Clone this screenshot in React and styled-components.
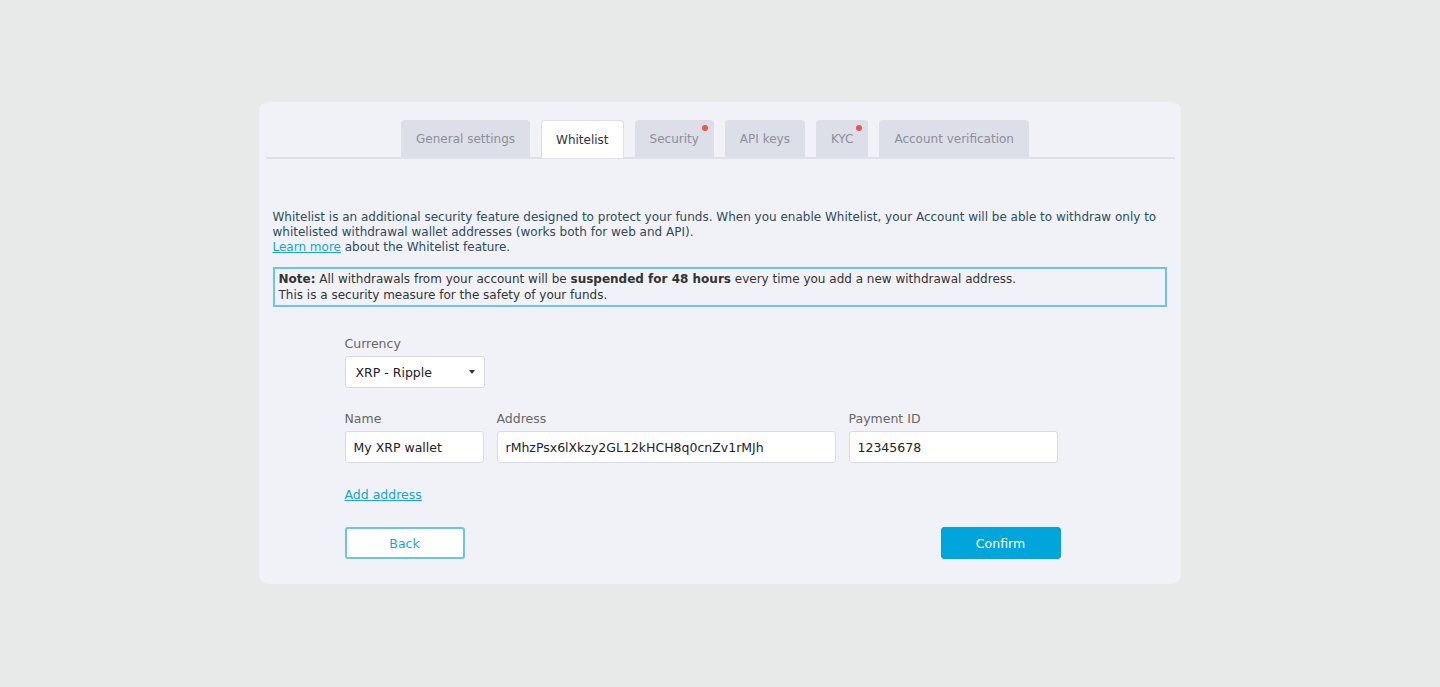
import React, { useState } from 'react';
import styled, { createGlobalStyle } from 'styled-components';

const GlobalStyle = createGlobalStyle`
    html, body {
        margin: 0;
        padding: 0;
        background: #e8e9e9;
        font-family: "DejaVu Sans", Verdana, sans-serif;
    }
`;

const tabs = [
    { id: 'general', label: 'General settings' },
    { id: 'whitelist', label: 'Whitelist' },
    { id: 'security', label: 'Security', dot: true },
    { id: 'api', label: 'API keys' },
    { id: 'kyc', label: 'KYC', dot: true },
    { id: 'verification', label: 'Account verification' },
];

const App = () => {
    const [active, setActive] = useState('whitelist');
    return (
        <>
            <GlobalStyle />
            <Page>
                <Card>
                    <TabBar>
                        {tabs.map((t) => (
                            <Tab key={t.id} $active={active === t.id} onClick={() => setActive(t.id)}>
                                {t.label}
                                {t.dot && <Dot />}
                            </Tab>
                        ))}
                    </TabBar>
                    <Body>
                        <Intro>
                            Whitelist is an additional security feature designed to protect your funds. When you enable Whitelist, your Account will be able to withdraw only to whitelisted withdrawal wallet addresses (works both for web and API).
                            <br />
                            <TextLink href="#">Learn more</TextLink> about the Whitelist feature.
                        </Intro>
                        <Note>
                            <b>Note:</b> All withdrawals from your account will be <b>suspended for 48 hours</b> every time you add a new withdrawal address.
                            <br />
                            This is a security measure for the safety of your funds.
                        </Note>
                        <Form>
                            <Field>
                                <Label>Currency</Label>
                                <Select $w={140}>
                                    <span>XRP - Ripple</span>
                                    <Caret />
                                </Select>
                            </Field>
                            <Row>
                                <Field>
                                    <Label>Name</Label>
                                    <Input $w={140} defaultValue="My XRP wallet" />
                                </Field>
                                <Field>
                                    <Label>Address</Label>
                                    <Input $w={340} defaultValue="rMhzPsx6lXkzy2GL12kHCH8q0cnZv1rMJh" />
                                </Field>
                                <Field>
                                    <Label>Payment ID</Label>
                                    <Input $w={210} defaultValue="12345678" />
                                </Field>
                            </Row>
                            <AddLink href="#">Add address</AddLink>
                            <Actions>
                                <Button>Back</Button>
                                <Button $primary>Confirm</Button>
                            </Actions>
                        </Form>
                    </Body>
                </Card>
            </Page>
        </>
    );
};

const Page = styled.div`
    width: 1440px;
    height: 687px;
    padding-top: 102px;
    box-sizing: border-box;
    display: flex;
    justify-content: center;
`;

const Card = styled.div`
    width: 922px;
    height: 482px;
    margin-left: -1px;
    box-sizing: border-box;
    background: #f1f2f7;
    border-radius: 9px;
    padding: 18px 6px 0 7px;
`;

const TabBar = styled.div`
    display: flex;
    justify-content: center;
    gap: 11px;
    padding-right: 10px;
    border-bottom: 2px solid #dfe0ec;
    height: 37px;
`;

const Tab = styled.div`
    position: relative;
    height: ${(p) => (p.$active ? '38px' : '37px')};
    box-sizing: border-box;
    padding: 0 ${(p) => (p.$active ? '14px' : '15px')};
    display: flex;
    align-items: center;
    font-size: 12px;
    border-radius: 4px 4px 0 0;
    cursor: pointer;
    color: ${(p) => (p.$active ? '#333' : '#8d8f99')};
    background: ${(p) => (p.$active ? '#fff' : '#dcdee8')};
    border: ${(p) => (p.$active ? '1px solid #dcdee8' : 'none')};
    border-bottom: none;
`;

const Dot = styled.span`
    position: absolute;
    top: 5px;
    right: 6px;
    width: 6px;
    height: 6px;
    border-radius: 50%;
    background: #f0524f;
`;

const Body = styled.div`
    padding: 51px 8px 0 7px;
`;

const Intro = styled.p`
    margin: 0;
    font-size: 12px;
    line-height: 15px;
    color: #2e4b5c;
`;

const TextLink = styled.a`
    color: #17a3d6;
    text-decoration: underline;
`;

const Note = styled.div`
    margin-top: 12px;
    border: 2px solid #6ac6e6;
    padding: 2px 4px 2px;
    font-size: 12px;
    line-height: 16px;
    color: #333;
`;

const Form = styled.div`
    padding: 30px 0 0 72px;
    display: flex;
    flex-direction: column;
`;

const Row = styled.div`
    display: flex;
    gap: 13px;
    margin-top: 24px;
`;

const Field = styled.div`
    display: flex;
    flex-direction: column;
    gap: 5px;
`;

const Label = styled.label`
    font-size: 12.5px;
    line-height: 14px;
    color: #666;
`;

const Input = styled.input`
    width: ${(p) => p.$w - 1}px;
    height: 32px;
    box-sizing: border-box;
    border: 1px solid #d9dbe4;
    border-radius: 3px;
    background: #fff;
    padding: 0 8px;
    font-family: inherit;
    font-size: 12.5px;
    color: #222;
    outline: none;
`;

const Select = styled.div`
    width: ${(p) => p.$w}px;
    height: 32px;
    box-sizing: border-box;
    border: 1px solid #d9dbe4;
    border-radius: 3px;
    background: #fff;
    padding: 0 9px 0 10px;
    display: flex;
    align-items: center;
    justify-content: space-between;
    font-size: 12.5px;
    color: #222;
`;

const Caret = styled.span`
    width: 0;
    height: 0;
    border-left: 3px solid transparent;
    border-right: 3px solid transparent;
    border-top: 4px solid #333;
`;

const AddLink = styled.a`
    margin-top: 25px;
    align-self: flex-start;
    font-size: 12.5px;
    line-height: 14px;
    color: #17a3d6;
    text-decoration: underline;
`;

const Actions = styled.div`
    display: flex;
    justify-content: space-between;
    width: 716px;
    margin-top: 25px;
`;

const Button = styled.button`
    width: 120px;
    height: 32px;
    border-radius: 3px;
    font-family: inherit;
    font-size: 12.5px;
    cursor: pointer;
    color: ${(p) => (p.$primary ? '#fff' : '#1aa3d6')};
    background: ${(p) => (p.$primary ? '#00a6db' : '#fff')};
    border: ${(p) => (p.$primary ? '1px solid #00a6db' : '2px solid #6ac6e6')};
`;

export default App;
